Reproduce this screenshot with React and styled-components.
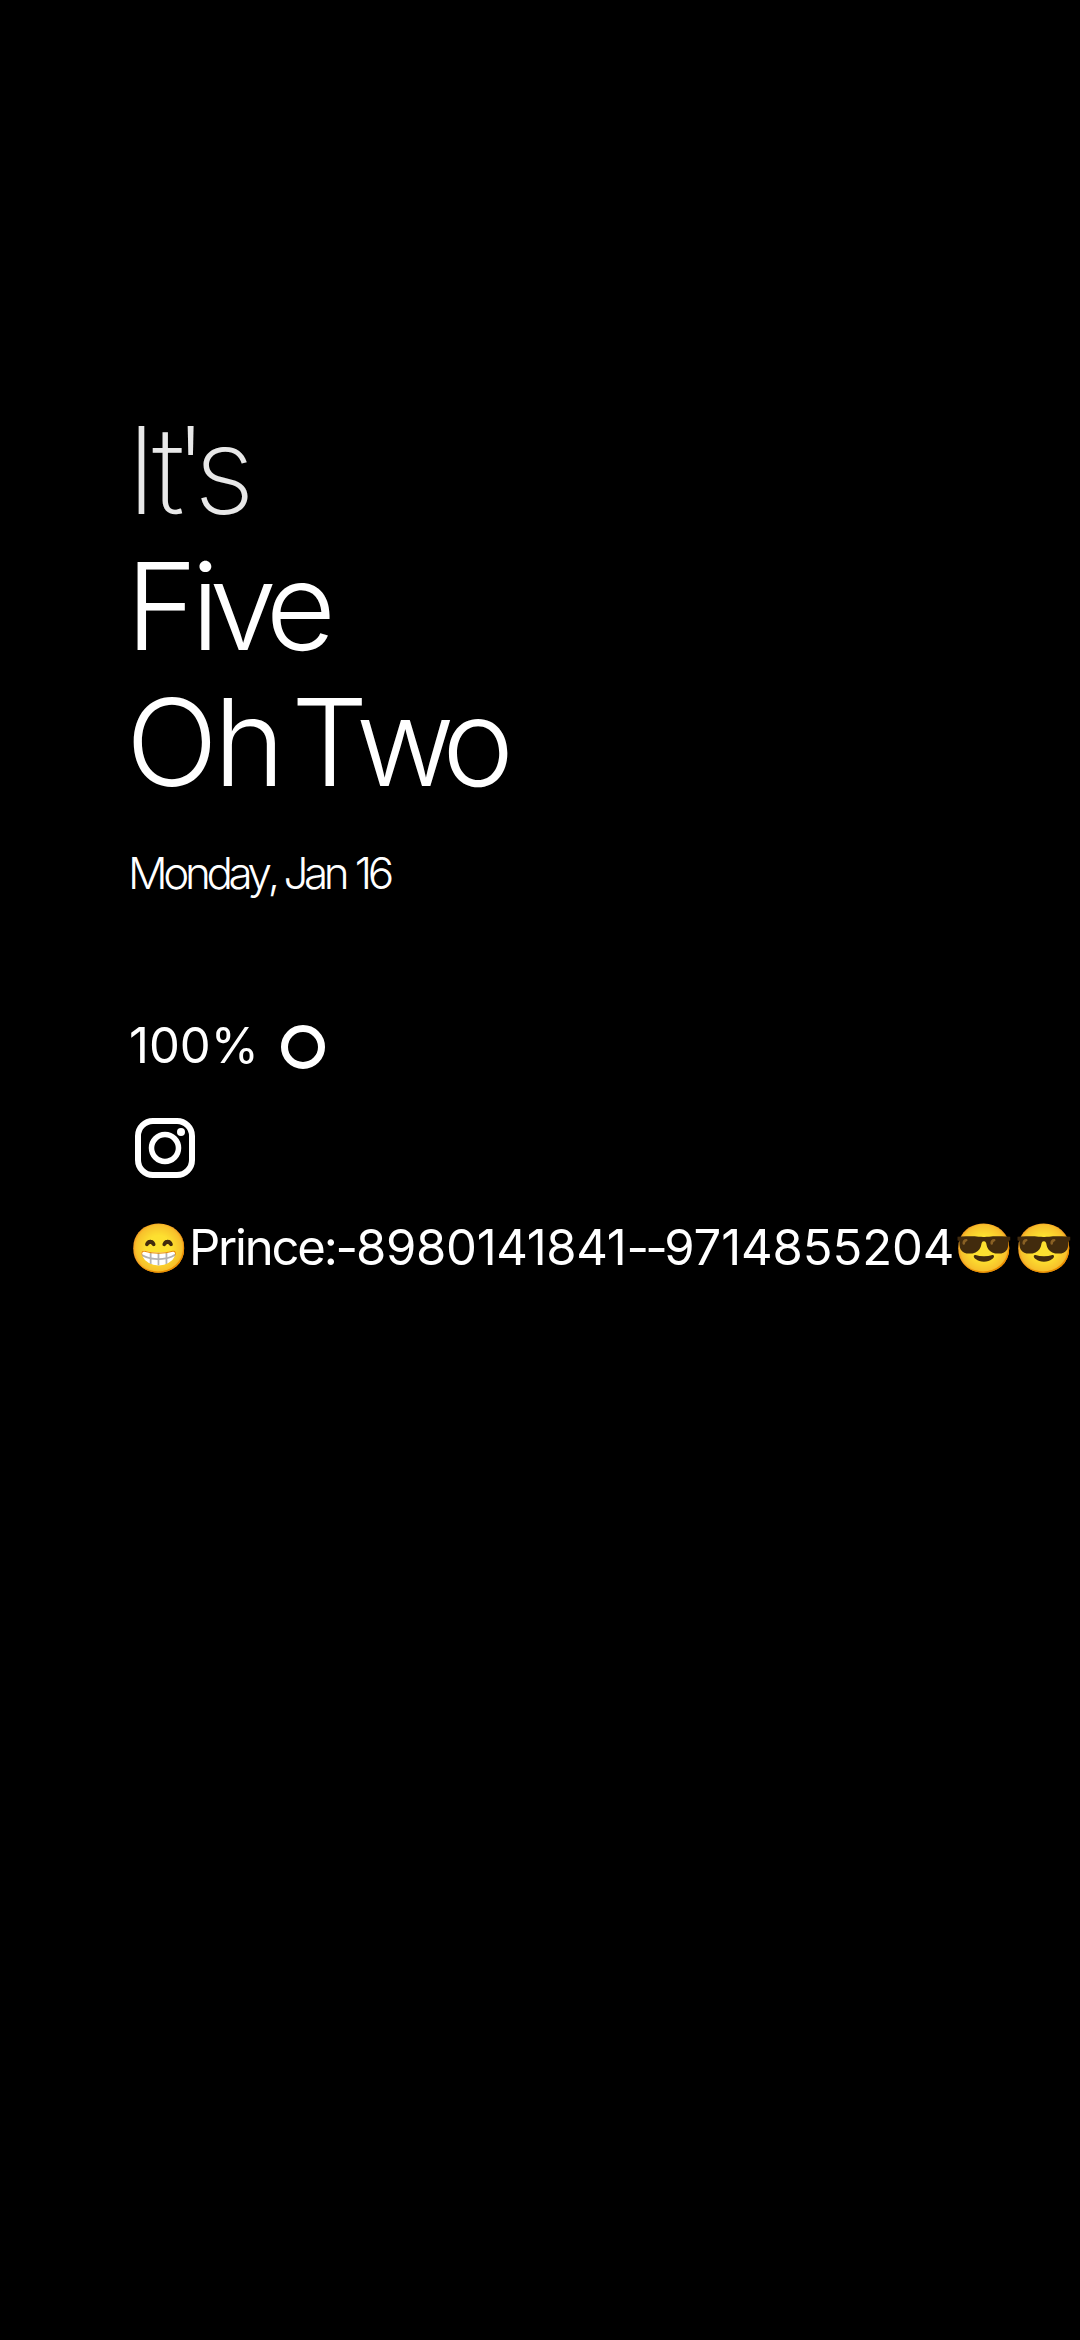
import React from "react";
import styled, { createGlobalStyle } from "styled-components";

const GlobalStyle = createGlobalStyle`
  html, body { margin: 0; background: #000; }
`;

const Screen = styled.main`
  box-sizing: border-box;
  width: 1080px;
  height: 2340px;
  padding: 402px 0 0 126px;
  overflow: hidden;
  background: #000;
  color: #fff;
  font-family: Inter, "Liberation Sans", sans-serif;
  white-space: nowrap;
`;

const Kern = styled.span`
  letter-spacing: ${(p) => p.$by}px;
`;

const ClockLine = styled.div`
  height: 136px;
  line-height: 136px;
  font-size: 121px;
  font-weight: ${(p) => p.$weight};
  letter-spacing: -4px;
  color: ${(p) => p.$color || "#fff"};
`;

const DateLine = styled.div`
  margin: 33px 0 0 2px;
  height: 60px;
  line-height: 60px;
  font-size: 44px;
  font-weight: 300;
  letter-spacing: -4.4px;
  word-spacing: 1.5px;
`;

const Battery = styled.div`
  display: flex;
  align-items: center;
  margin: 113px 0 0 3px;
  height: 60px;
  line-height: 60px;
  font-size: 49px;
  font-weight: 400;
  letter-spacing: 0;
`;

const Level = styled.span`
  width: 152px;
`;

const Ring = styled.span`
  box-sizing: border-box;
  width: 44px;
  height: 44px;
  margin-top: 2px;
  border: 7px solid #fff;
  border-radius: 50%;
`;

const Notification = styled.svg`
  display: block;
  margin: 41px 0 0 8px;
  width: 62px;
  height: 62px;
`;

const Message = styled.div`
  display: flex;
  margin: 39px 0 0 3px;
  height: 60px;
  line-height: 60px;
  font-size: 49px;
  font-weight: 400;
`;

const Emoji = styled.span`
  font-size: 48px;
`;

export default function App() {
  return (
    <>
      <GlobalStyle />
      <Screen>
        <ClockLine $weight={200} $color="#e8e8e8">
          <Kern $by={-5}>I</Kern><Kern $by={-11}>t</Kern><Kern $by={-14}>'</Kern>s
        </ClockLine>
        <ClockLine $weight={300}>
          <Kern $by={-6}>F</Kern><Kern $by={-10}>i</Kern><Kern $by={-11}>v</Kern>e
        </ClockLine>
        <ClockLine $weight={300}>
          <Kern $by={-4}>O</Kern><Kern $by={-14}>h </Kern><Kern $by={-12}>T</Kern><Kern $by={-12.5}>w</Kern>o
        </ClockLine>
        <DateLine>Monday<Kern $by={-6}>,</Kern> Jan 16</DateLine>
        <Battery><Level>100%</Level><Ring /></Battery>
        <Notification viewBox="0 0 62 62" fill="none" stroke="#fff">
          <rect x="4" y="4" width="54" height="54" rx="15" strokeWidth="6" />
          <circle cx="31" cy="31" r="13.5" strokeWidth="5.5" />
          <circle cx="47" cy="15" r="4" fill="#fff" stroke="none" />
        </Notification>
        <Message>
          <Emoji>😁</Emoji>
          <Kern $by={-2.2}>Prince:-</Kern>
          <Kern $by={-0.3}>8980141841</Kern>
          <Kern $by={-3.6}>--</Kern>
          <Kern $by={-0.1}>9714855204</Kern>
          <Emoji>😎😎</Emoji>
        </Message>
      </Screen>
    </>
  );
}
